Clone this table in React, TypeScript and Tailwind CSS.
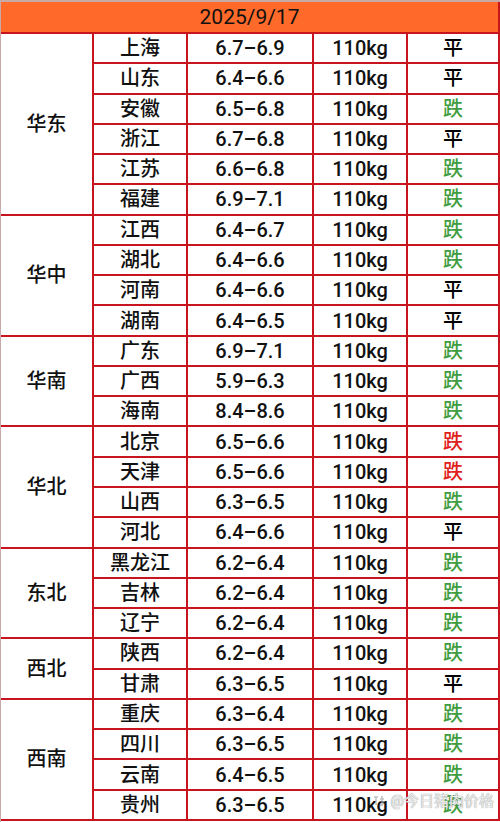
const GREEN = 'text-[#3f9d3f]';
const RED = 'text-[#e0201a]';

type Row = { city: string; range: string; trend: '平' | '跌' | '跌红' };
type Group = { region: string; rows: Row[] };

const groups: Group[] = [
  {
    region: '华东',
    rows: [
      { city: '上海', range: '6.7–6.9', trend: '平' },
      { city: '山东', range: '6.4–6.6', trend: '平' },
      { city: '安徽', range: '6.5–6.8', trend: '跌' },
      { city: '浙江', range: '6.7–6.8', trend: '平' },
      { city: '江苏', range: '6.6–6.8', trend: '跌' },
      { city: '福建', range: '6.9–7.1', trend: '跌' },
    ],
  },
  {
    region: '华中',
    rows: [
      { city: '江西', range: '6.4–6.7', trend: '跌' },
      { city: '湖北', range: '6.4–6.6', trend: '跌' },
      { city: '河南', range: '6.4–6.6', trend: '平' },
      { city: '湖南', range: '6.4–6.5', trend: '平' },
    ],
  },
  {
    region: '华南',
    rows: [
      { city: '广东', range: '6.9–7.1', trend: '跌' },
      { city: '广西', range: '5.9–6.3', trend: '跌' },
      { city: '海南', range: '8.4–8.6', trend: '跌' },
    ],
  },
  {
    region: '华北',
    rows: [
      { city: '北京', range: '6.5–6.6', trend: '跌红' },
      { city: '天津', range: '6.5–6.6', trend: '跌红' },
      { city: '山西', range: '6.3–6.5', trend: '跌' },
      { city: '河北', range: '6.4–6.6', trend: '平' },
    ],
  },
  {
    region: '东北',
    rows: [
      { city: '黑龙江', range: '6.2–6.4', trend: '跌' },
      { city: '吉林', range: '6.2–6.4', trend: '跌' },
      { city: '辽宁', range: '6.2–6.4', trend: '跌' },
    ],
  },
  {
    region: '西北',
    rows: [
      { city: '陕西', range: '6.2–6.4', trend: '跌' },
      { city: '甘肃', range: '6.3–6.5', trend: '平' },
    ],
  },
  {
    region: '西南',
    rows: [
      { city: '重庆', range: '6.3–6.4', trend: '跌' },
      { city: '四川', range: '6.3–6.5', trend: '跌' },
      { city: '云南', range: '6.4–6.5', trend: '跌' },
      { city: '贵州', range: '6.3–6.5', trend: '跌' },
    ],
  },
];

const cell = 'border-2 border-[#c8141c] p-0 text-center align-middle';

const Trend = ({ trend }: { trend: Row['trend'] }) => {
  if (trend === '平') return <span className="text-black">平</span>;
  return <span className={trend === '跌红' ? RED : GREEN}>跌</span>;
};

export default function App() {
  return (
    <div
      className="relative h-[822px] w-[500px] overflow-hidden border-t-2 border-l border-[#c9a9a7] bg-white text-[20px] font-medium text-[#111]"
      style={{ fontFamily: 'Roboto, "Noto Sans CJK SC", sans-serif' }}
    >
      <table className="w-[498px] table-fixed border-collapse">
        <colgroup>
          <col className="w-[92px]" />
          <col className="w-[94px]" />
          <col className="w-[126px]" />
          <col className="w-[94px]" />
          <col className="w-[92px]" />
        </colgroup>
        <tbody>
          <tr className="h-[31px]">
            <td
              colSpan={5}
              className="border-2 border-t-0 border-l-0 border-[#c8141c] bg-[#ff6a2a] p-0 text-center align-middle text-[21px] leading-none font-normal"
            >
              2025/9/17
            </td>
          </tr>
          {groups.map((g) =>
            g.rows.map((r, i) => (
              <tr key={r.city} className="h-[30.27px] leading-none">
                {i === 0 && (
                  <td rowSpan={g.rows.length} className={`${cell} border-l-0`}>
                    {g.region}
                  </td>
                )}
                <td className={cell}>{r.city}</td>
                <td className={cell}>{r.range}</td>
                <td className={cell}>110kg</td>
                <td className={cell}>
                  <Trend trend={r.trend} />
                </td>
              </tr>
            ))
          )}
        </tbody>
      </table>

      {/* watermark */}
      <div className="absolute right-[6px] bottom-[10px] flex items-center gap-1 text-[15px] font-normal text-white/80 [text-shadow:0_0_1px_#9a9a9a,0_0_1px_#9a9a9a]">
        <svg width="16" height="16" viewBox="0 0 16 16" className="opacity-70">
          <path d="M3 4 L7 4 M5 4 L5 12 M9 6 L13 6 M11 3 L11 13 M9 13 L13 10" stroke="#aaa" strokeWidth="1.6" fill="none" />
        </svg>
        <span>@今日猪肉价格</span>
      </div>
    </div>
  );
}
